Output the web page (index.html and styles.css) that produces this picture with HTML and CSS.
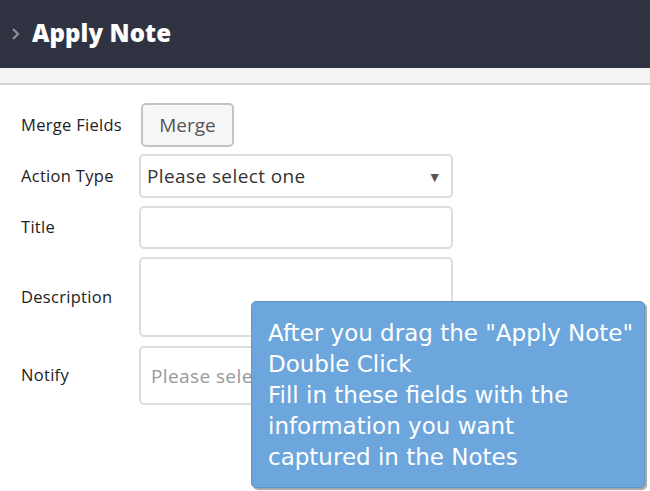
FILE: index.html
```html
<!DOCTYPE html>
<html>
<head>
<meta charset="utf-8">
<link rel="stylesheet" href="styles.css">
</head>
<body>
<header class="topbar">
  <span class="chev">
    <svg width="9" height="14" viewBox="0 0 9 14"><path d="M2 2 L7 7 L2 12" fill="none" stroke="#8d9099" stroke-width="2.2"/></svg>
  </span>
  <h1 class="title">Apply Note</h1>
</header>
<div class="subbar"></div>
<main class="form">
  <div class="row r-merge">
    <label class="lbl">Merge Fields</label>
    <button class="btn">Merge</button>
  </div>
  <div class="row r-select">
    <label class="lbl">Action Type</label>
    <div class="ctl select"><span class="sel-text">Please select one</span><span class="caret">▼</span></div>
  </div>
  <div class="row r-title">
    <label class="lbl">Title</label>
    <div class="ctl input"></div>
  </div>
  <div class="row r-desc">
    <label class="lbl">Description</label>
    <div class="ctl textarea"></div>
  </div>
  <div class="row r-notify">
    <label class="lbl">Notify</label>
    <div class="ctl notify"><span class="ph">Please select</span></div>
  </div>
</main>
<div class="tip">After you drag the "Apply Note"<br>Double Click<br>Fill in these fields with the<br>information you want<br>captured in the Notes</div>
</body>
</html>
```
FILE: styles.css
```css
html, body { margin: 0; padding: 0; background: #fff; }
body { width: 650px; height: 491px; overflow: hidden; position: relative; font-family: "Open Sans", "Lato", sans-serif; }
.topbar { height: 68px; background: #2f3241; display: flex; align-items: center; padding-left: 11px; box-sizing: border-box; }
.chev { display: flex; align-items: center; margin-right: 12px; margin-top: -1px; }
.title { margin: 0; color: #fff; font-family: "Open Sans", "Lato", sans-serif; font-weight: 800; font-size: 24px; letter-spacing: 0.1px; margin-top: -3px; }
.subbar { height: 15px; background: #f4f4f4; border-bottom: 2px solid #d3d3d3; }
.form { padding: 17px 0 0 21px; display: flex; flex-direction: column; }
.row { display: grid; grid-template-columns: 118px 314px; align-items: center; }
.lbl { font-size: 16.5px; color: #222; letter-spacing: 0.3px; margin-top: -2px; }
.r-merge { height: 44px; margin-top: 1px; }
.r-select { margin-top: 7px; }
.r-title { margin-top: 8px; }
.r-desc { margin-top: 8px; }
.r-notify { margin-top: 9px; }
.btn { justify-self: start; margin-left: 2px; width: 93px; height: 44px; border: 2px solid #c4c4c4; border-radius: 5px; background: #f7f7f7; font-family: inherit; font-size: 19px; color: #555; padding: 0; }
.ctl { box-sizing: border-box; border: 2px solid #dedede; border-radius: 5px; background: #fff; }
.select { height: 44px; display: flex; align-items: center; justify-content: space-between; padding: 0 9px 0 6px; font-size: 19px; letter-spacing: 0.4px; color: #333; }
.caret { font-size: 14px; color: #555; }
.input { height: 43px; }
.textarea { height: 80px; }
.notify { height: 59px; display: flex; align-items: center; padding-left: 10px; font-size: 19px; letter-spacing: 0.4px; color: #999; }
.tip { position: absolute; left: 251px; top: 301px; width: 394px; height: 187px; box-sizing: border-box; background: #6ca6dc; border: 1px solid #5d95c9; border-radius: 5px; box-shadow: 2px 2px 1px rgba(0,0,0,0.35); padding: 16px 6px 0 16px; color: #fff; font-family: "DejaVu Sans", sans-serif; font-size: 23px; line-height: 31px; white-space: nowrap; }
```
